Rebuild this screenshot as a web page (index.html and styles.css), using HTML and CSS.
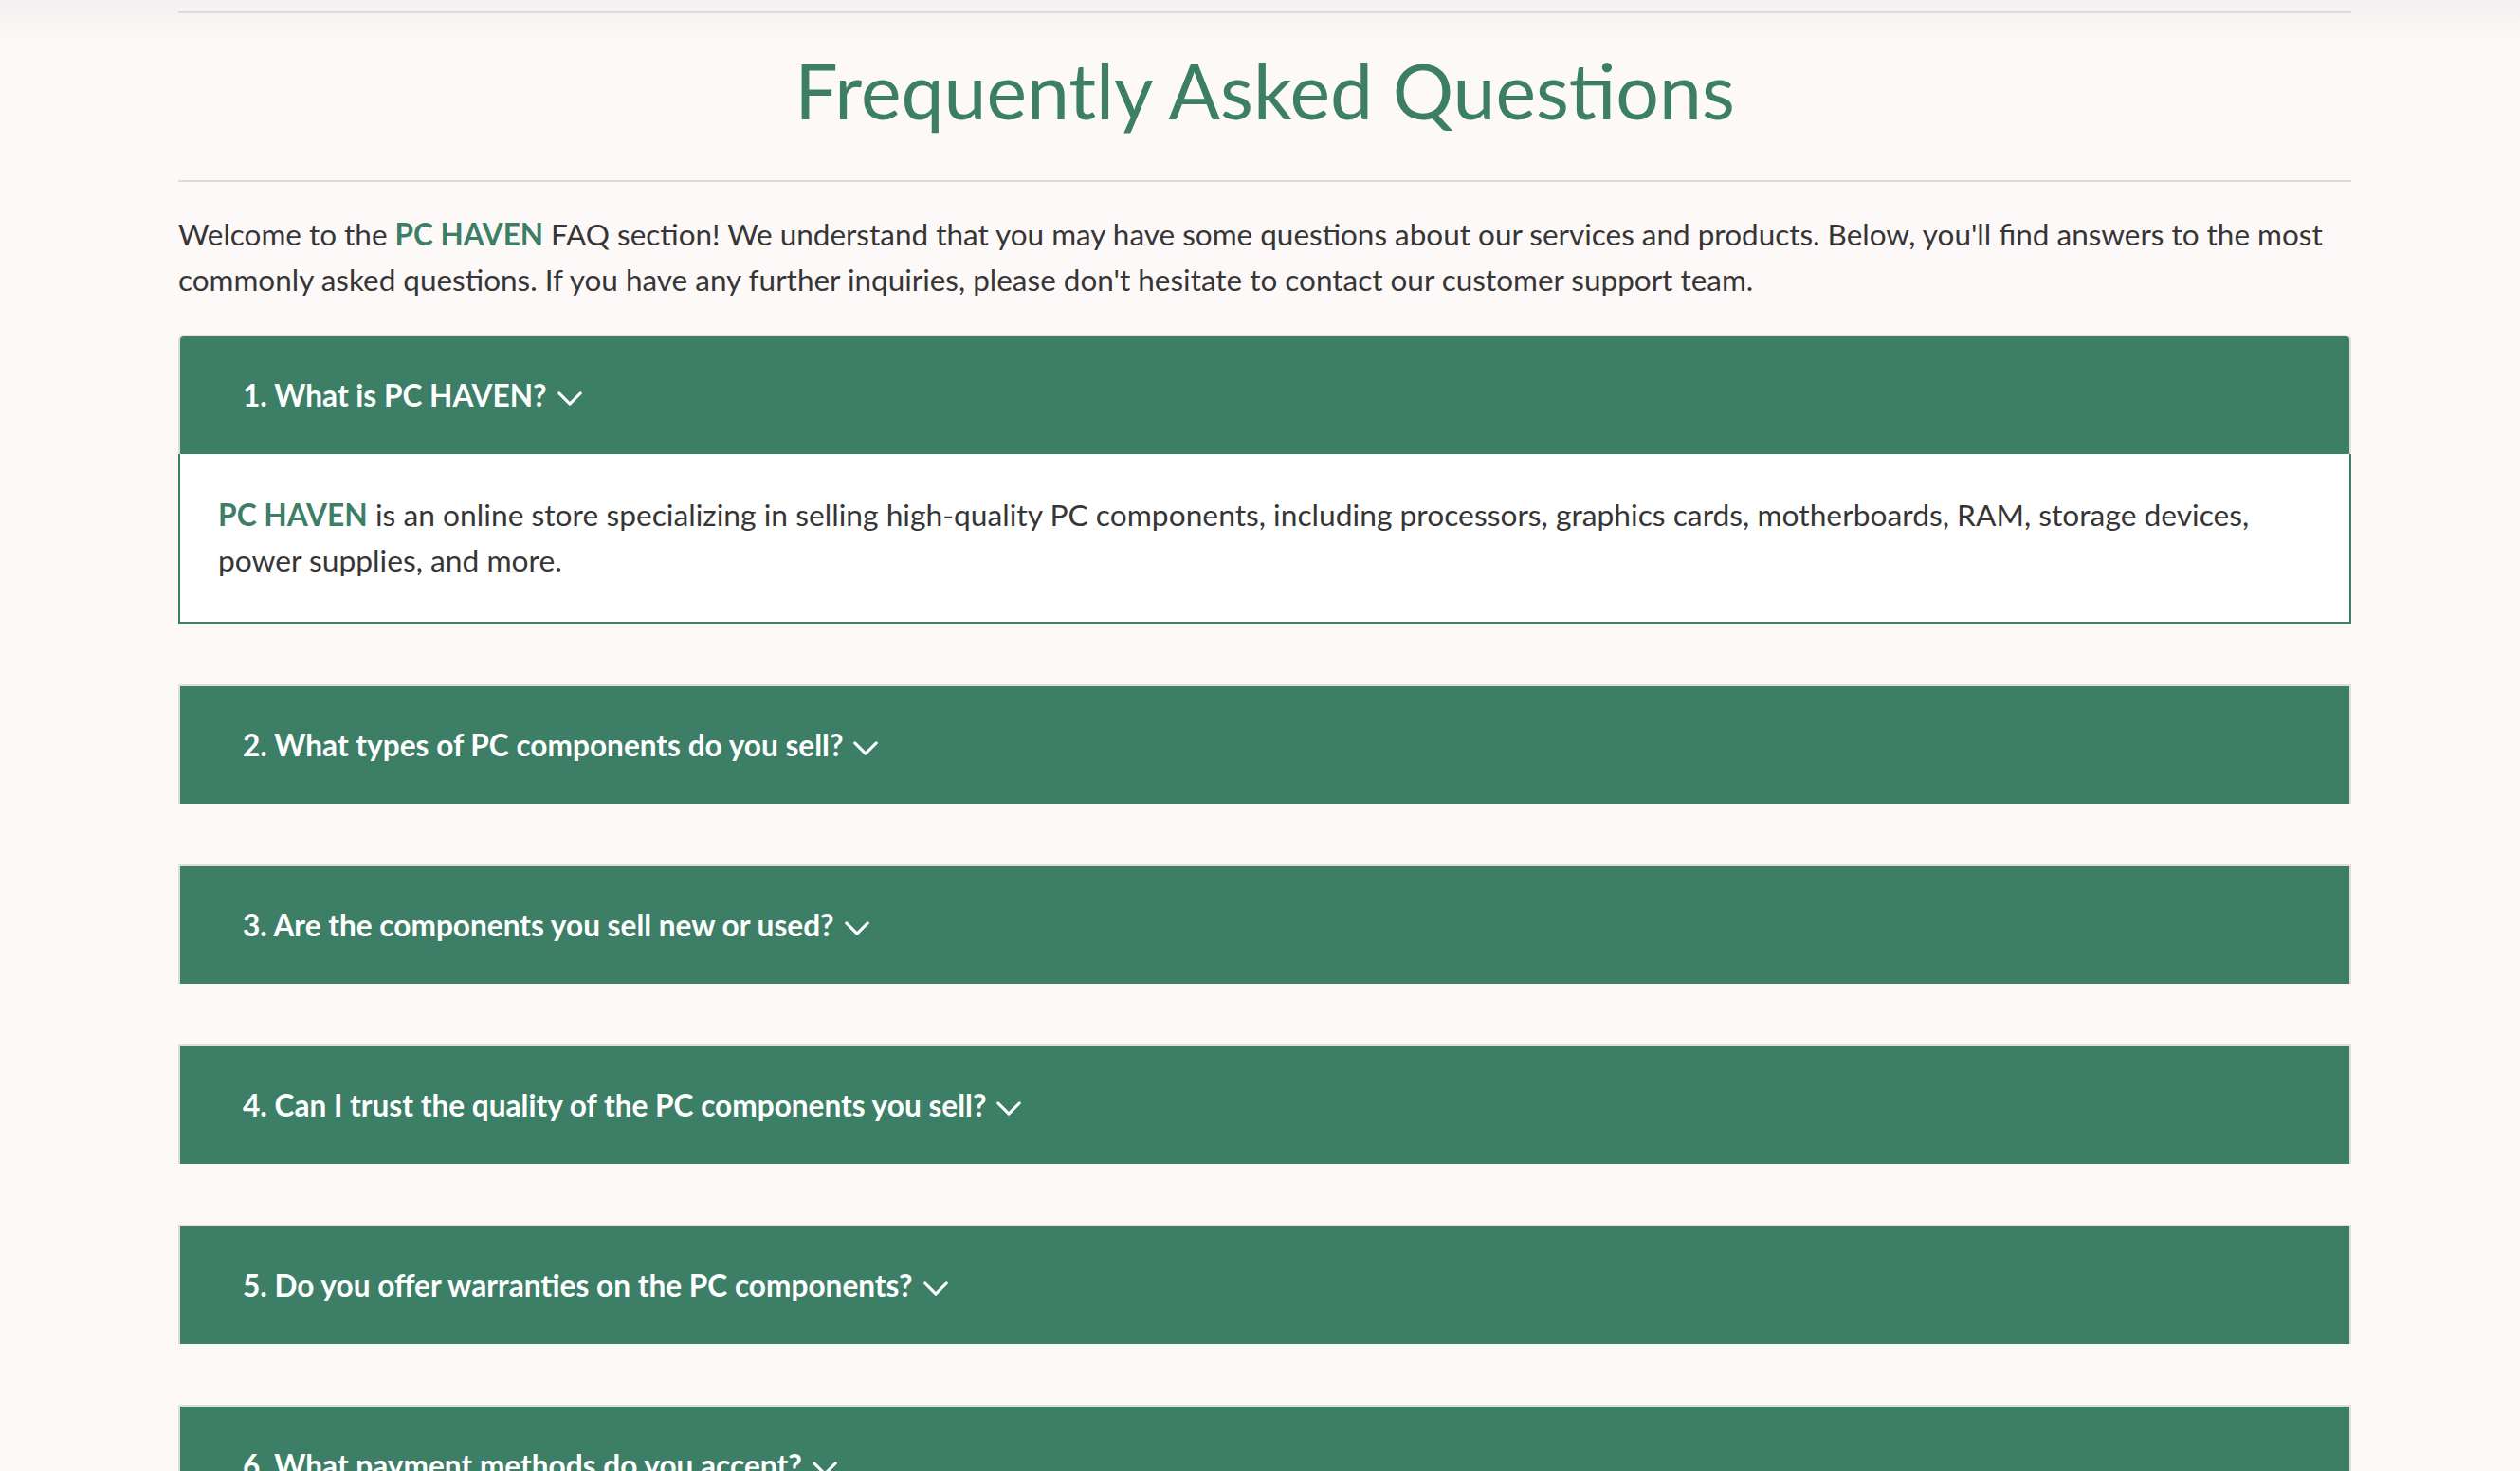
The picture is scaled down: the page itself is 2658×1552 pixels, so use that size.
FILE: index.html
```html
<!DOCTYPE html>
<html lang="en">
<head>
<meta charset="utf-8">
<title>FAQ - PC HAVEN</title>
<link rel="stylesheet" href="styles.css">
</head>
<body>
<main class="page">
  <header class="faq-head">
    <h1 class="faq-title">Frequently Asked Questions</h1>
  </header>
  <p class="intro">Welcome to the <span class="brand">PC HAVEN</span> FAQ section! We understand that you may have some questions about our services and products. Below, you'll find answers to the most commonly asked questions. If you have any further inquiries, please don't hesitate to contact our customer support team.</p>

  <section class="faq-list">
    <div class="faq-item open">
      <div class="question">1. What is PC HAVEN?<svg class="chev" viewBox="0 0 28 16" width="28" height="15"><polyline points="2,2 14,14 26,2"/></svg></div>
      <div class="answer"><span class="brand">PC HAVEN</span> is an online store specializing in selling high-quality PC components, including processors, graphics cards, motherboards, RAM, storage devices, power supplies, and more.</div>
    </div>
    <div class="faq-item">
      <div class="question">2. What types of PC components do you sell?<svg class="chev" viewBox="0 0 28 16" width="28" height="15"><polyline points="2,2 14,14 26,2"/></svg></div>
    </div>
    <div class="faq-item">
      <div class="question">3. Are the components you sell new or used?<svg class="chev" viewBox="0 0 28 16" width="28" height="15"><polyline points="2,2 14,14 26,2"/></svg></div>
    </div>
    <div class="faq-item">
      <div class="question">4. Can I trust the quality of the PC components you sell?<svg class="chev" viewBox="0 0 28 16" width="28" height="15"><polyline points="2,2 14,14 26,2"/></svg></div>
    </div>
    <div class="faq-item">
      <div class="question">5. Do you offer warranties on the PC components?<svg class="chev" viewBox="0 0 28 16" width="28" height="15"><polyline points="2,2 14,14 26,2"/></svg></div>
    </div>
    <div class="faq-item">
      <div class="question">6. What payment methods do you accept?<svg class="chev" viewBox="0 0 28 16" width="28" height="15"><polyline points="2,2 14,14 26,2"/></svg></div>
    </div>
    <div class="faq-item">
      <div class="question">7. How long does shipping take?<svg class="chev" viewBox="0 0 28 16" width="28" height="15"><polyline points="2,2 14,14 26,2"/></svg></div>
    </div>
  </section>
</main>
</body>
</html>
```

FILE: styles.css
```css
html, body {
  margin: 0;
  padding: 0;
}

body {
  background: #fdf9f8 linear-gradient(to bottom, #f2f0f0 0, #fdf9f8 44px) no-repeat;
  font-family: Lato, "Open Sans", "Liberation Sans", sans-serif;
  color: #363636;
  font-size: 31.6px;
  line-height: 48px;
}

.page {
  width: 2292px;
  margin-left: 188px;
  padding-top: 12px;
}

.faq-head {
  border-top: 2px solid #dedbda;
  border-bottom: 2px solid #dedbda;
  padding: 33px 0 47px;
}

.faq-title {
  margin: 0;
  text-align: center;
  font-size: 80.5px;
  line-height: 96px;
  font-weight: 400;
  color: #3d7f66;
}

.intro {
  margin: 31px 0 34px;
  font-size: 31.48px;
}

.brand {
  color: #3d7f66;
  font-weight: 700;
}

.faq-list {
  display: flex;
  flex-direction: column;
  gap: 64px;
}

.faq-item {
  border: 2px solid #dfdedc;
  border-bottom: none;
}

.faq-item.open {
  border-radius: 6px 6px 0 0;
}

.faq-item.open .question {
  border-radius: 4px 4px 0 0;
}

.question {
  background: #3d7f66;
  color: #ffffff;
  font-weight: 700;
  padding: 38px 66px;
  height: 48px;
}

.chev {
  margin-left: 10px;
  vertical-align: 1px;
  fill: none;
  stroke: #ffffff;
  stroke-width: 3.2;
  stroke-linecap: round;
  stroke-linejoin: round;
}

.answer {
  background: #ffffff;
  border: 2px solid #3d7f66;
  border-top: none;
  margin: 0 -2px;
  padding: 40px 40px 41px;
  font-size: 31.75px;
}
```
